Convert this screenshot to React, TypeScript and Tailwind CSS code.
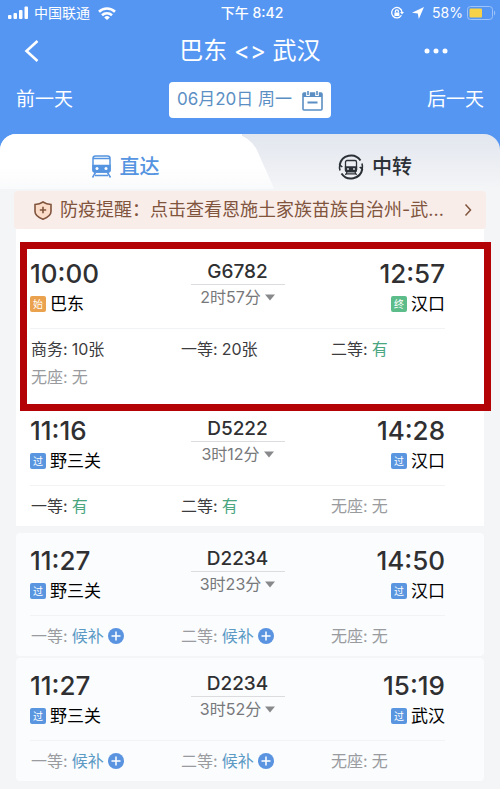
import clsx from 'clsx'

type Seat = { name: string; value: string; kind: 'count' | 'yes' | 'none' | 'wait' }
type Stop = { time: string; station: string; tag: string; tagClass: string }
type Train = {
  no: string
  duration: string
  from: Stop
  to: Stop
  seats: Seat[]
  marked?: boolean
  soldOut?: boolean
}

const ORANGE = 'bg-[#eba24e]'
const GREEN = 'bg-[#5cbd8b]'
const BLUE = 'bg-[#5a96e0]'

const waitSeats: Seat[] = [
  { name: '一等', value: '候补', kind: 'wait' },
  { name: '二等', value: '候补', kind: 'wait' },
  { name: '无座', value: '无', kind: 'none' },
]

const trains: Train[] = [
  {
    no: 'G6782',
    duration: '2时57分',
    from: { time: '10:00', station: '巴东', tag: '始', tagClass: ORANGE },
    to: { time: '12:57', station: '汉口', tag: '终', tagClass: GREEN },
    seats: [
      { name: '商务', value: '10张', kind: 'count' },
      { name: '一等', value: '20张', kind: 'count' },
      { name: '二等', value: '有', kind: 'yes' },
      { name: '无座', value: '无', kind: 'none' },
    ],
    marked: true,
  },
  {
    no: 'D5222',
    duration: '3时12分',
    from: { time: '11:16', station: '野三关', tag: '过', tagClass: BLUE },
    to: { time: '14:28', station: '汉口', tag: '过', tagClass: BLUE },
    seats: [
      { name: '一等', value: '有', kind: 'yes' },
      { name: '二等', value: '有', kind: 'yes' },
      { name: '无座', value: '无', kind: 'none' },
    ],
  },
  {
    no: 'D2234',
    duration: '3时23分',
    from: { time: '11:27', station: '野三关', tag: '过', tagClass: BLUE },
    to: { time: '14:50', station: '汉口', tag: '过', tagClass: BLUE },
    seats: waitSeats,
    soldOut: true,
  },
  {
    no: 'D2234',
    duration: '3时52分',
    from: { time: '11:27', station: '野三关', tag: '过', tagClass: BLUE },
    to: { time: '15:19', station: '武汉', tag: '过', tagClass: BLUE },
    seats: waitSeats,
    soldOut: true,
  },
]

function StatusBar() {
  return (
    <div className="grid h-[26px] grid-cols-[1fr_auto_1fr] items-center pl-2 pr-1 text-sm">
      <div className="flex items-center gap-1">
        <svg width="22" height="14" viewBox="0 0 22 14" fill="currentColor">
          <rect x="0" y="9" width="3.5" height="4" rx="1" />
          <rect x="5.5" y="7" width="3.5" height="6" rx="1" />
          <rect x="11" y="4" width="3.5" height="9" rx="1" />
          <rect x="16.5" y="0.5" width="3.5" height="12.5" rx="1" />
        </svg>
        <span>中国联通</span>
        <svg className="ml-1" width="18" height="13" viewBox="0 0 18 13" fill="none" stroke="currentColor" strokeWidth="2.6">
          <path d="M1 4.8a11.5 11.5 0 0 1 16 0" />
          <path d="M4 8.2a7.2 7.2 0 0 1 10 0" />
          <path d="M9 13 6.2 10.4a4 4 0 0 1 5.6 0Z" fill="currentColor" stroke="none" />
        </svg>
      </div>
      <span className="font-medium">下午 8:42</span>
      <div className="flex items-center justify-end gap-1">
        <svg width="14" height="14" viewBox="0 0 14 14" fill="none" stroke="currentColor" strokeWidth="1.3">
          <path d="M11.4 9.2A5.2 5.2 0 1 1 12 6" />
          <path d="m10 6 2 2.400 2-2.400z" fill="currentColor" stroke="none" />
          <rect x="4.4" y="6.4" width="5" height="3.6" rx="0.6" fill="currentColor" stroke="none" />
          <path d="M5.400 6.600V5.300a1.500 1.500 0 0 1 3 0v1.300" />
        </svg>
        <svg className="ml-1" width="12" height="12" viewBox="0 0 12 12" fill="currentColor">
          <path d="M12 0 0 5.700l5.800.7L6.800 12z" />
        </svg>
        <span className="ml-1">58%</span>
        <svg width="29" height="14" viewBox="0 0 29 14">
          <rect x="0.5" y="0.5" width="25" height="13" rx="3" fill="none" stroke="#9cc3fa" />
          <rect x="2.5" y="2.5" width="12.5" height="9" rx="1" fill="#f7d247" />
          <path d="M27 4.500c1.600.8 1.600 4.200 0 5z" fill="#9cc3fa" />
        </svg>
      </div>
    </div>
  )
}

function Header() {
  return (
    <header className="text-white">
      <StatusBar />
      <div className="grid h-[50px] grid-cols-[1fr_auto_1fr] items-center pl-6 pr-[52px]">
        <button aria-label="返回" className="w-4">
          <svg width="16" height="22" viewBox="0 0 16 22" fill="none" stroke="currentColor" strokeWidth="2.6">
            <path d="M13.500 1 2.500 11l11 10" />
          </svg>
        </button>
        <h1 className="pl-7 text-2xl">巴东 &lt;&gt; 武汉</h1>
        <button aria-label="更多" className="justify-self-end">
          <svg width="24" height="6" viewBox="0 0 24 6" fill="currentColor">
            <circle cx="3" cy="3" r="2.500" />
            <circle cx="12" cy="3" r="2.500" />
            <circle cx="21" cy="3" r="2.500" />
          </svg>
        </button>
      </div>
      <div className="flex h-12 items-center justify-between px-4 text-[19px]">
        <button>前一天</button>
        <button className="flex h-9 items-center gap-2.5 rounded-sm bg-white px-2 text-[17px] text-[#5b8fc4]">
          <span>06月20日 周一</span>
          <svg width="21" height="21" viewBox="0 0 21 21" fill="none" stroke="currentColor" strokeWidth="1.6">
            <rect x="1" y="3" width="19" height="17" rx="1" />
            <path d="M1 5h19" strokeWidth="4" />
            <path d="M6 0v6M15 0v6" stroke="#fff" strokeWidth="3.600" />
            <path d="M6 1v4M15 1v4" />
            <path d="M5.500 12.500h10" strokeWidth="2" />
          </svg>
        </button>
        <button>后一天</button>
      </div>
    </header>
  )
}

function Tabs() {
  return (
    <div className="mt-2.5 grid h-[55px] grid-cols-2 overflow-hidden rounded-t-2xl bg-linear-to-b from-[#e2e6ee] to-[#f4f5f7] text-xl font-medium">
      <button className="relative flex items-center justify-center gap-2 pt-2.5 text-[#5594e0]">
        <span className="absolute inset-y-0 left-0 right-2 bg-linear-to-b from-white from-60% to-[#f9fafb]" />
        <span className="absolute inset-y-0 -right-3 w-24 skew-x-24 rounded-tr-2xl bg-linear-to-b from-white from-60% to-[#f9fafb]" />
        <svg className="relative" width="21" height="23" viewBox="0 0 21 23" fill="none" stroke="currentColor" strokeWidth="1.500">
          <rect x="2" y="1" width="17" height="16" rx="2.500" fill="#fff" />
          <path d="M2 3.500h17" />
          <path d="M2 10.500h17V15q0 2-2 2H4q-2 0-2-2Z" fill="currentColor" />
          <circle cx="6" cy="13.500" r="1.500" fill="#fff" stroke="none" />
          <circle cx="15" cy="13.500" r="1.500" fill="#fff" stroke="none" />
          <path d="m4.500 17.500-3 5M16.500 17.500l3 5M4 20.500h13" />
        </svg>
        <span className="relative">直达</span>
      </button>
      <button className="flex items-center justify-center gap-2 pt-2.5 text-[#2c3138]">
        <svg width="26" height="26" viewBox="0 0 26 26" fill="none" stroke="currentColor" strokeWidth="2">
          <path d="M1.700 11A11.500 11.500 0 0 1 22.500 6.500" />
          <path d="M24.300 15A11.500 11.500 0 0 1 3.500 19.500" />
          <path d="M24 9.500q.8 3 .2 5.500l-2.500-2M2 16.500q-.8-3-.2-5.500l2.500 2" strokeWidth="1.600" />
          <rect x="7.500" y="6.500" width="11" height="11" rx="1.500" strokeWidth="1.300" />
          <path d="M7.500 13h11v3q0 1.500-1.500 1.500H9q-1.500 0-1.500-1.500Z" fill="currentColor" strokeWidth="1.300" />
          <circle cx="10" cy="15" r="0.900" fill="#e8ebf1" stroke="none" />
          <circle cx="16" cy="15" r="0.900" fill="#e8ebf1" stroke="none" />
          <path d="m9 18-1.500 3M17 18l1.500 3M8.500 19.800h9" strokeWidth="1.200" />
        </svg>
        <span>中转</span>
      </button>
    </div>
  )
}

function Notice() {
  return (
    <a href="#notice" className="mx-3.5 flex h-[38px] items-center gap-2 rounded-sm bg-[#f9edea] px-5 text-lg text-[#80543d]">
      <svg className="shrink-0" width="18" height="19" viewBox="0 0 18 19" fill="none" stroke="currentColor" strokeWidth="1.600">
        <path d="M9 1c2.400 1.600 5 2.300 8 2.500v7c0 3.800-3.500 6-8 7.700-4.500-1.700-8-3.900-8-7.700v-7C4 3.300 6.600 2.600 9 1Z" fill="#fbdcc8" />
        <path d="M9 5.800v6.400M5.800 9h6.400" />
      </svg>
      <span className="flex-1 whitespace-nowrap">防疫提醒：点击查看恩施土家族苗族自治州-武...</span>
      <svg className="-mr-1.5 shrink-0" width="8" height="14" viewBox="0 0 8 14" fill="none" stroke="currentColor" strokeWidth="1.500">
        <path d="m1.500 1.500 5 5.500-5 5.500" />
      </svg>
    </a>
  )
}

function StopInfo({ stop, end }: { stop: Stop; end?: boolean }) {
  return (
    <div className={clsx('flex flex-col', end && 'items-end')}>
      <span className="text-[26px] leading-8 font-medium text-[#303032]">{stop.time}</span>
      <span className="flex items-center gap-1 text-[17px] leading-7 text-black">
        <span className={clsx('grid size-4 place-items-center rounded-xs text-[10px] leading-4 text-white', stop.tagClass)}>
          {stop.tag}
        </span>
        {stop.station}
      </span>
    </div>
  )
}

function SeatInfo({ seat, soldOut }: { seat: Seat; soldOut?: boolean }) {
  const muted = soldOut || seat.kind === 'none'
  return (
    <div className={clsx('flex items-center gap-1 text-base leading-7', muted ? 'text-[#999b9e]' : 'text-[#3c3c3e]')}>
      <span>{seat.name}:</span>
      <span className={clsx(seat.kind === 'yes' && 'text-[#4aa581]', seat.kind === 'wait' && 'text-[#5b9ac4]')}>
        {seat.value}
      </span>
      {seat.kind === 'wait' && (
        <svg width="16" height="16" viewBox="0 0 16 16">
          <circle cx="8" cy="8" r="8" fill="#5a94e0" />
          <path d="M8 3.500v9M3.500 8h9" stroke="#fff" strokeWidth="1.500" />
        </svg>
      )}
    </div>
  )
}

function TrainCard({ train }: { train: Train }) {
  return (
    <article className={clsx('relative pt-3', train.marked ? 'pb-3' : 'pb-1.5', train.soldOut ? 'rounded-sm bg-[#fafcfe]' : 'bg-white')}>
      <div className="ml-3.5 mr-[39px] grid grid-cols-[1fr_auto_1fr] border-b border-[#f2f3f4] pb-2.5">
        <StopInfo stop={train.from} />
        <div className="flex w-[94px] flex-col items-center pt-0.5">
          <span className="text-[19px] leading-6 font-medium text-[#303032]">{train.no}</span>
          <span className="h-px w-full bg-[#dcdcde]" />
          <button className="flex items-center gap-1 text-base leading-6 text-[#77787a]">
            {train.duration}
            <svg width="10" height="7" viewBox="0 0 10 7" fill="#88898b">
              <path d="M0 0.500h10l-5 6z" />
            </svg>
          </button>
        </div>
        <StopInfo stop={train.to} end />
      </div>
      <div className="grid grid-cols-3 pl-[15px] pr-[3px] pt-1.5">
        {train.seats.map((s) => (
          <SeatInfo key={s.name} seat={s} soldOut={train.soldOut} />
        ))}
      </div>
      {train.marked && (
        <div className="pointer-events-none absolute -top-1 -right-[7px] -bottom-2 left-1 z-10 border-[7px] border-[#b30306]" />
      )}
    </article>
  )
}

export default function App() {
  return (
    <main className="min-h-screen bg-[#f4f5f6] font-['Inter','Noto_Sans_CJK_SC',sans-serif]">
      <div className="bg-[#5596f2]">
        <Header />
        <Tabs />
      </div>
      <div className="pt-0.5">
        <Notice />
        <div className="mx-4 rounded-b-sm bg-white pt-[17px]">
          <TrainCard train={trains[0]} />
          <TrainCard train={trains[1]} />
        </div>
        <div className="mx-4 mt-[7px] flex flex-col gap-0.5 pb-1">
          <TrainCard train={trains[2]} />
          <TrainCard train={trains[3]} />
        </div>
      </div>
    </main>
  )
}
